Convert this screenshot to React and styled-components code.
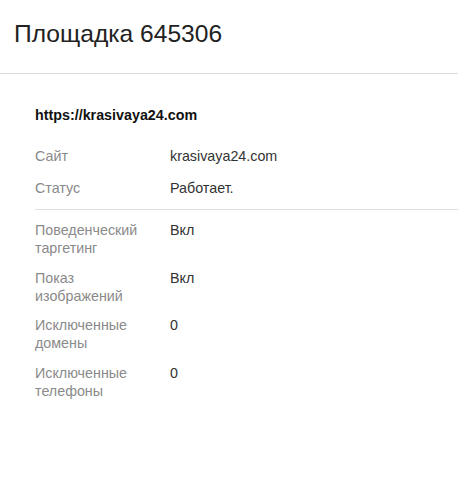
import React from "react";
import styled, { createGlobalStyle } from "styled-components";

const GlobalStyle = createGlobalStyle`
  html, body {
    margin: 0;
    padding: 0;
    background: #fff;
    font-family: "Liberation Sans", Arial, sans-serif;
  }
`;

const Page = styled.div`
  width: 458px;
  min-height: 483px;
  background: #fff;
`;

const Header = styled.div`
  height: 53px;
  padding: 20px 14px 0;
  border-bottom: 1px solid #d9d9d9;
`;

const Title = styled.h1`
  margin: 0;
  font-size: 24.6px;
  line-height: 28px;
  font-weight: 400;
  color: #222;
`;

const Body = styled.div`
  padding: 33px 0 0 35px;
`;

const SiteLink = styled.div`
  font-size: 14.3px;
  line-height: 17px;
  font-weight: 700;
  color: #111;
  margin-bottom: 16px;
`;

const Section = styled.div`
  padding-bottom: ${(props) => (props.divided ? "5px" : "0")};
  border-bottom: ${(props) => (props.divided ? "1px solid #e0e0e0" : "none")};
  margin-bottom: ${(props) => (props.divided ? "5px" : "0")};
`;

const Row = styled.div`
  display: flex;
  padding: ${(props) => (props.compact ? "6px 0 5.5px" : "7px 0")};
  font-size: 14.3px;
  line-height: 18px;
`;

const Label = styled.div`
  width: 115px;
  margin-right: 20px;
  color: #8a8a8a;
  flex-shrink: 0;
`;

const Value = styled.div`
  color: #333;
`;

const mainRows = [
  { label: "Сайт", value: "krasivaya24.com" },
  { label: "Статус", value: "Работает." },
];

const settingRows = [
  { label: "Поведенческий таргетинг", value: "Вкл" },
  { label: "Показ изображений", value: "Вкл" },
  { label: "Исключенные домены", value: "0" },
  { label: "Исключенные телефоны", value: "0" },
];

const App = () => {
  return (
    <Page>
      <GlobalStyle />
      <Header>
        <Title>Площадка 645306</Title>
      </Header>
      <Body>
        <SiteLink>https://krasivaya24.com</SiteLink>
        <Section divided>
          {mainRows.map((row) => (
            <Row key={row.label}>
              <Label>{row.label}</Label>
              <Value>{row.value}</Value>
            </Row>
          ))}
        </Section>
        <Section>
          {settingRows.map((row) => (
            <Row key={row.label} compact>
              <Label>{row.label}</Label>
              <Value>{row.value}</Value>
            </Row>
          ))}
        </Section>
      </Body>
    </Page>
  );
};

export default App;
